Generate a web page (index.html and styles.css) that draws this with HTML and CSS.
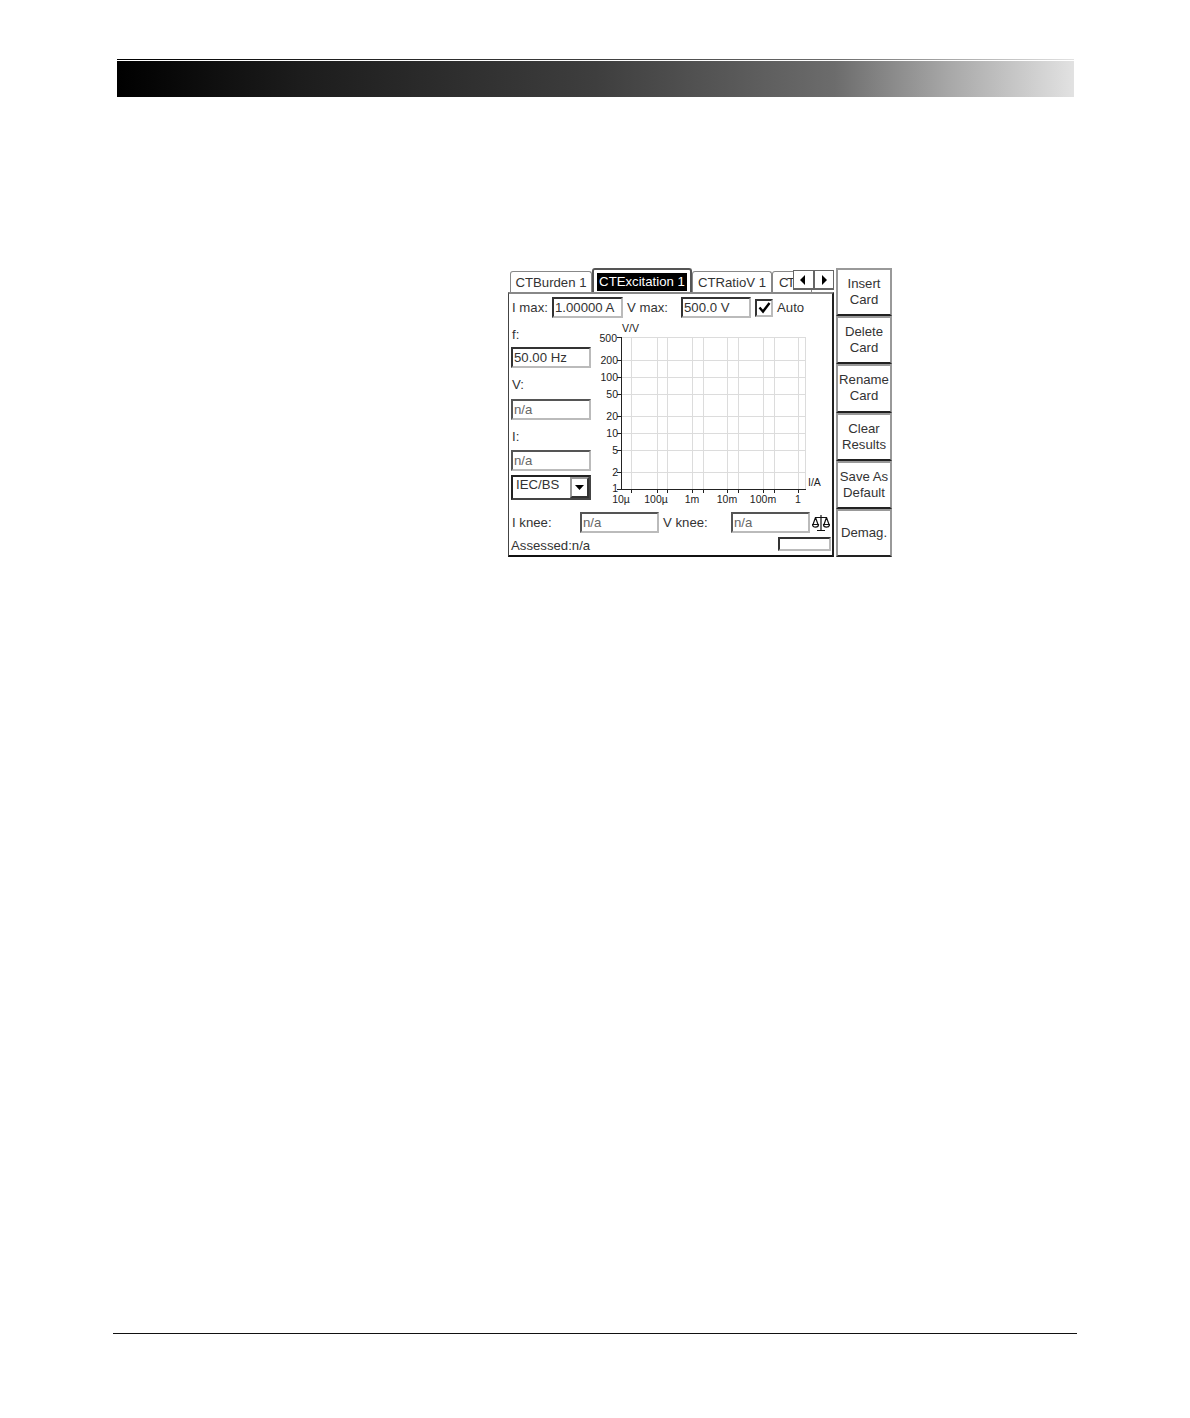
FILE: index.html
```html
<!DOCTYPE html>
<html lang="en">
<head>
    <meta charset="UTF-8">
    <title>CT Excitation</title>
    <link rel="stylesheet" href="styles.css">
</head>
<body>
    <div class="header">
        <div class="header-line"></div>
        <div class="header-band"></div>
    </div>

    <div class="screen">
        <div class="main">
            <div class="tabs">
                <div class="tab tab-burden">CTBurden 1</div>
                <div class="tab tab-active"><span>CTExcitation 1</span></div>
                <div class="tab tab-ratio">CTRatioV 1</div>
                <div class="tab tab-clip">CT</div>
                <div class="arrows">
                    <div class="arrow"><svg width="8" height="10" viewBox="0 0 8 10"><path d="M6 0V10L1 5Z" fill="#000"/></svg></div>
                    <div class="arrow"><svg width="8" height="10" viewBox="0 0 8 10"><path d="M2 0V10L7 5Z" fill="#000"/></svg></div>
                </div>
            </div>
            <div class="panel">
                <div class="row-top">
                    <span class="label label-imax">I max:</span>
                    <div class="field field-imax">1.00000 A</div>
                    <span class="label label-vmax">V max:</span>
                    <div class="field field-vmax">500.0 V</div>
                    <div class="checkbox"><svg width="13" height="13" viewBox="0 0 13 13"><path d="M1.500 6.500L5 10.500L11.500 2" fill="none" stroke="#000" stroke-width="2.400"/></svg></div>
                    <span class="label label-auto">Auto</span>
                </div>
                <div class="middle">
                    <div class="side">
                        <span class="label side-f">f:</span>
                        <div class="field field-side">50.00 Hz</div>
                        <span class="label side-v">V:</span>
                        <div class="field field-side field-na">n/a</div>
                        <span class="label side-i">I:</span>
                        <div class="field field-side field-na">n/a</div>
                        <div class="select">
                            <span>IEC/BS</span>
                            <div class="select-btn"><svg width="9" height="5" viewBox="0 0 9 5"><path d="M0 0H9L4.500 5Z" fill="#000"/></svg></div>
                        </div>
                    </div>
                    <svg class="chart" width="237" height="190" viewBox="594 319 237 190">
                        <g class="grid">
                            <path d="M631.500 337V489M657.500 337V489M667.500 337V489M692.500 337V489M703.500 337V489M727.500 337V489M738.500 337V489M763.500 337V489M774.500 337V489M798.500 337V489M805.500 337V489"/>
                            <path d="M621 337.500H806M621 360.500H806M621 377.500H806M621 394.500H806M621 416.500H806M621 433.500H806M621 450.500H806M621 472.500H806"/>
                        </g>
                        <path class="axis" d="M621.500 337V490M617 489.500H806M617 337.500H621M617 360.500H621M617 377.500H621M617 394.500H621M617 416.500H621M617 433.500H621M617 450.500H621M617 472.500H621M631.500 489V493M657.500 489V493M667.500 489V493M692.500 489V493M703.500 489V493M727.500 489V493M738.500 489V493M763.500 489V493M774.500 489V493M798.500 489V493"/>
                        <g class="tick-y">
                            <text x="617" y="342">500</text>
                            <text x="618" y="364">200</text>
                            <text x="618" y="381">100</text>
                            <text x="618" y="398">50</text>
                            <text x="618" y="420">20</text>
                            <text x="618" y="437">10</text>
                            <text x="618" y="454">5</text>
                            <text x="618" y="476">2</text>
                            <text x="618" y="492">1</text>
                        </g>
                        <g class="tick-x">
                            <text x="621" y="503">10µ</text>
                            <text x="656" y="503">100µ</text>
                            <text x="692" y="503">1m</text>
                            <text x="727" y="503">10m</text>
                            <text x="763" y="503">100m</text>
                            <text x="798" y="503">1</text>
                        </g>
                        <text class="unit" x="622" y="332">V/V</text>
                        <text class="unit" x="808" y="486">I/A</text>
                    </svg>
                </div>
                <div class="row-knee">
                    <span class="label label-iknee">I knee:</span>
                    <div class="field field-knee field-na">n/a</div>
                    <span class="label label-vknee">V knee:</span>
                    <div class="field field-knee field-na">n/a</div>
                    <svg class="scales" width="18" height="18" viewBox="0 0 18 18">
                        <path d="M9 1V16M5 16.500H13M3 3.500H15M3.500 3.500L1 10.500M3.500 3.500L6 10.500M14.500 3.500L12 10.500M14.500 3.500L17 10.500M0.500 10.500H6.500C6.500 14 0.500 14 0.500 10.500ZM11.500 10.500H17.500C17.500 14 11.500 14 11.500 10.500Z" fill="none" stroke="#111" stroke-width="1.200"/>
                    </svg>
                </div>
                <div class="row-status">
                    <span class="label label-status">Assessed:n/a</span>
                    <div class="status-box"></div>
                </div>
            </div>
        </div>
        <div class="softkeys">
            <div class="softkey">Insert<br>Card</div>
            <div class="softkey">Delete<br>Card</div>
            <div class="softkey">Rename<br>Card</div>
            <div class="softkey">Clear<br>Results</div>
            <div class="softkey">Save As<br>Default</div>
            <div class="softkey">Demag.</div>
        </div>
    </div>

    <div class="footer-line"></div>
</body>
</html>
```

FILE: styles.css
```css
body {
    margin: 0;
    background-color: white;
    font-family: "Liberation Sans", Arial, sans-serif;
    color: #333;
}
.header {
    margin: 59px 116px 0 117px;
}
.header-line {
    height: 1px;
    margin-bottom: 1px;
    background: linear-gradient(to right, #000 0%, #1c1c1c 19%, #3e3e3e 50%, #6c6c6c 75%, #a8a8a8 87%, #e2e2e2 100%);
}
.header-band {
    height: 36px;
    background: linear-gradient(to right, #000 0%, #1c1c1c 19%, #3e3e3e 50%, #6c6c6c 75%, #a8a8a8 87%, #e2e2e2 100%);
}
.screen {
    display: flex;
    width: 384px;
    height: 289px;
    margin: 171px 0 0 508px;
    font-size: 13.200px;
}
.main {
    width: 326px;
    margin-right: 2px;
    display: flex;
    flex-direction: column;
}
.tabs {
    display: flex;
    height: 24px;
    padding-left: 2px;
    position: relative;
}
.tab {
    box-sizing: border-box;
    height: 21px;
    margin-top: 3px;
    border: 1px solid #888;
    border-bottom: none;
    border-radius: 3px 3px 0 0;
    text-align: center;
    line-height: 21px;
    white-space: nowrap;
    overflow: hidden;
}
.tab-burden {
    width: 82px;
}
.tab-active {
    width: 100px;
    height: 24px;
    margin-top: 0;
    border: 2px solid #555;
    border-bottom: none;
    padding: 3px 3px 0;
    line-height: 17px;
}
.tab-active span {
    display: block;
    background-color: #000;
    color: white;
    height: 18px;
}
.tab-ratio {
    width: 80px;
}
.tab-clip {
    width: 40px;
    text-align: left;
    padding-left: 6px;
    letter-spacing: -1.500px;
}
.arrows {
    position: absolute;
    left: 285px;
    top: 2px;
    display: flex;
    background-color: white;
}
.arrow {
    box-sizing: border-box;
    width: 20.500px;
    height: 20px;
    border: 1px solid #666;
    border-bottom-width: 2px;
    display: flex;
    align-items: center;
    justify-content: center;
}
.panel {
    flex: 1;
    box-sizing: border-box;
    border-top: 2px solid #888;
    border-left: 1px solid #444;
    border-right: 2px solid #222;
    border-bottom: 2px solid #111;
    display: flex;
    flex-direction: column;
}
.label {
    white-space: nowrap;
}
.field {
    box-sizing: border-box;
    height: 21px;
    border: 2px solid;
    border-color: #333 #bbb #bbb #333;
    padding-left: 1px;
    line-height: 17px;
    white-space: nowrap;
}
.field-na {
    color: #666;
    border-color: #555 #bbb #bbb #555;
}
.row-top {
    display: flex;
    align-items: center;
    height: 21px;
    margin-top: 3px;
    padding-left: 3px;
}
.label-imax {
    width: 40px;
}
.field-imax {
    width: 71px;
}
.label-vmax {
    width: 54px;
    margin-left: 4px;
}
.field-vmax {
    width: 70px;
}
.checkbox {
    box-sizing: border-box;
    width: 18px;
    height: 18px;
    margin-left: 4px;
    border: 2px solid;
    border-color: #333 #bbb #bbb #333;
    display: flex;
    align-items: center;
    justify-content: center;
}
.label-auto {
    margin-left: 4px;
}
.middle {
    display: flex;
    height: 190px;
    margin-top: 1px;
}
.side {
    width: 82px;
    margin-left: 2px;
    display: flex;
    flex-direction: column;
}
.field-side {
    width: 80px;
}
.side-f {
    margin-top: 8px;
    height: 20px;
    padding-left: 1px;
}
.side-v {
    margin-top: 9px;
    height: 22px;
    padding-left: 1px;
}
.side-i {
    margin-top: 9px;
    height: 21px;
    padding-left: 1px;
}
.select {
    box-sizing: border-box;
    display: flex;
    justify-content: space-between;
    width: 80px;
    height: 25px;
    margin-top: 4px;
    border: 2px solid;
    border-color: #222 #444 #444 #222;
    padding-left: 3px;
    line-height: 16px;
}
.select-btn {
    box-sizing: border-box;
    width: 19px;
    height: 21px;
    border: 2px solid #333;
    border-top-color: #999;
    border-left-color: #999;
    display: flex;
    align-items: center;
    justify-content: center;
}
.chart {
    display: block;
    margin-left: 1px;
}
.grid path {
    fill: none;
    stroke: #dcdcdc;
    stroke-width: 1;
}
.axis {
    fill: none;
    stroke: #222;
    stroke-width: 1;
}
.tick-y text {
    font-size: 10.500px;
    text-anchor: end;
    fill: #222;
}
.tick-x text {
    font-size: 10.500px;
    text-anchor: middle;
    fill: #222;
}
.unit {
    font-size: 10.500px;
    fill: #222;
}
.row-knee {
    display: flex;
    align-items: center;
    height: 21px;
    margin-top: 3px;
    padding-left: 3px;
}
.label-iknee {
    width: 68px;
}
.field-knee {
    width: 79px;
}
.label-vknee {
    width: 68px;
    margin-left: 4px;
}
.scales {
    margin-left: 2px;
}
.row-status {
    display: flex;
    justify-content: space-between;
    align-items: center;
    height: 18px;
    margin-top: 1px;
    padding: 0 1px 0 2px;
}
.label-status {
    padding-top: 4px;
}
.status-box {
    box-sizing: border-box;
    width: 53px;
    height: 14px;
    margin-top: 2px;
    border: 2px solid;
    border-color: #333 #bbb #bbb #333;
}
.softkeys {
    width: 56px;
    display: flex;
    flex-direction: column;
}
.softkey {
    flex: 1;
    box-sizing: border-box;
    border: 2px solid #999;
    border-bottom-color: #222;
    border-left-color: #999;
    display: flex;
    align-items: center;
    justify-content: center;
    text-align: center;
    line-height: 16px;
    white-space: nowrap;
}
.footer-line {
    height: 1px;
    margin: 776px 113px 0;
    background-color: #111;
}
```
